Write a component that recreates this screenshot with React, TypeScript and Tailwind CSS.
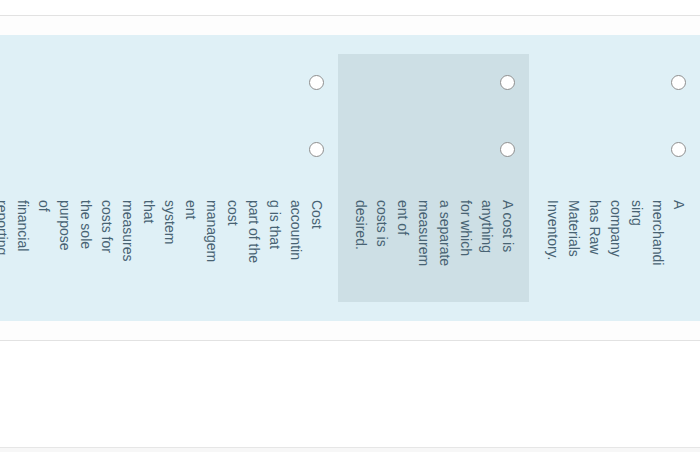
import React from "react";

const Radio = () => (
  <div className="flex w-[21px] justify-center">
    <span className="block h-[15px] w-[15px] rounded-full border-[1.5px] border-[#8e8e8e] bg-white" />
  </div>
);

type ColProps = { lines: string[]; width: string; highlight?: boolean };

const Column = ({ lines, width, highlight }: ColProps) => (
  <div
    className={`flex h-[248px] shrink-0 flex-col items-end pr-[11px] pt-[21px] ${width} ${
      highlight ? "bg-[#cddfe5]" : ""
    }`}
  >
    <Radio />
    <div className="mt-[52px]">
      <Radio />
    </div>
    <div className="mt-[43px] whitespace-nowrap text-[14px] leading-[21px] text-[#486373] [writing-mode:vertical-rl]">
      {lines.map((l, i) => (
        <React.Fragment key={i}>
          {l}
          {i < lines.length - 1 && <br />}
        </React.Fragment>
      ))}
    </div>
  </div>
);

export default function App() {
  return (
    <div
      className="relative h-[453px] w-[700px] overflow-hidden bg-white"
      style={{ fontFamily: '"Liberation Sans", Arial, sans-serif' }}
    >
      <div className="h-[15px]" />
      <div className="h-px bg-[#e2e2e2]" />
      <div className="h-[19px] bg-[#fdfdfd]" />
      <div className="flex h-[286px] flex-row-reverse overflow-hidden bg-[#dff0f6] py-[19px]">
        <Column
          width="w-[171px]"
          lines={["A", "merchandi", "sing", "company", "has Raw", "Materials", "Inventory."]}
        />
        <Column
          width="w-[191px]"
          highlight
          lines={["A cost is", "anything", "for which", "a separate", "measurem", "ent of", "costs is", "desired."]}
        />
        <Column
          width="w-[191px]"
          lines={[
            "Cost",
            "accountin",
            "g is that",
            "part of the",
            "cost",
            "managem",
            "ent",
            "system",
            "that",
            "measures",
            "costs for",
            "the sole",
            "purpose",
            "of",
            "financial",
            "reporting.",
          ]}
        />
      </div>
      <div className="h-[19px] bg-[#fdfdfd]" />
      <div className="h-px bg-[#e2e2e2]" />
      <div className="h-[106px] bg-white" />
      <div className="h-px bg-[#e6e6e6]" />
      <div className="h-[4px] bg-[#f7f7f7]" />
    </div>
  );
}
